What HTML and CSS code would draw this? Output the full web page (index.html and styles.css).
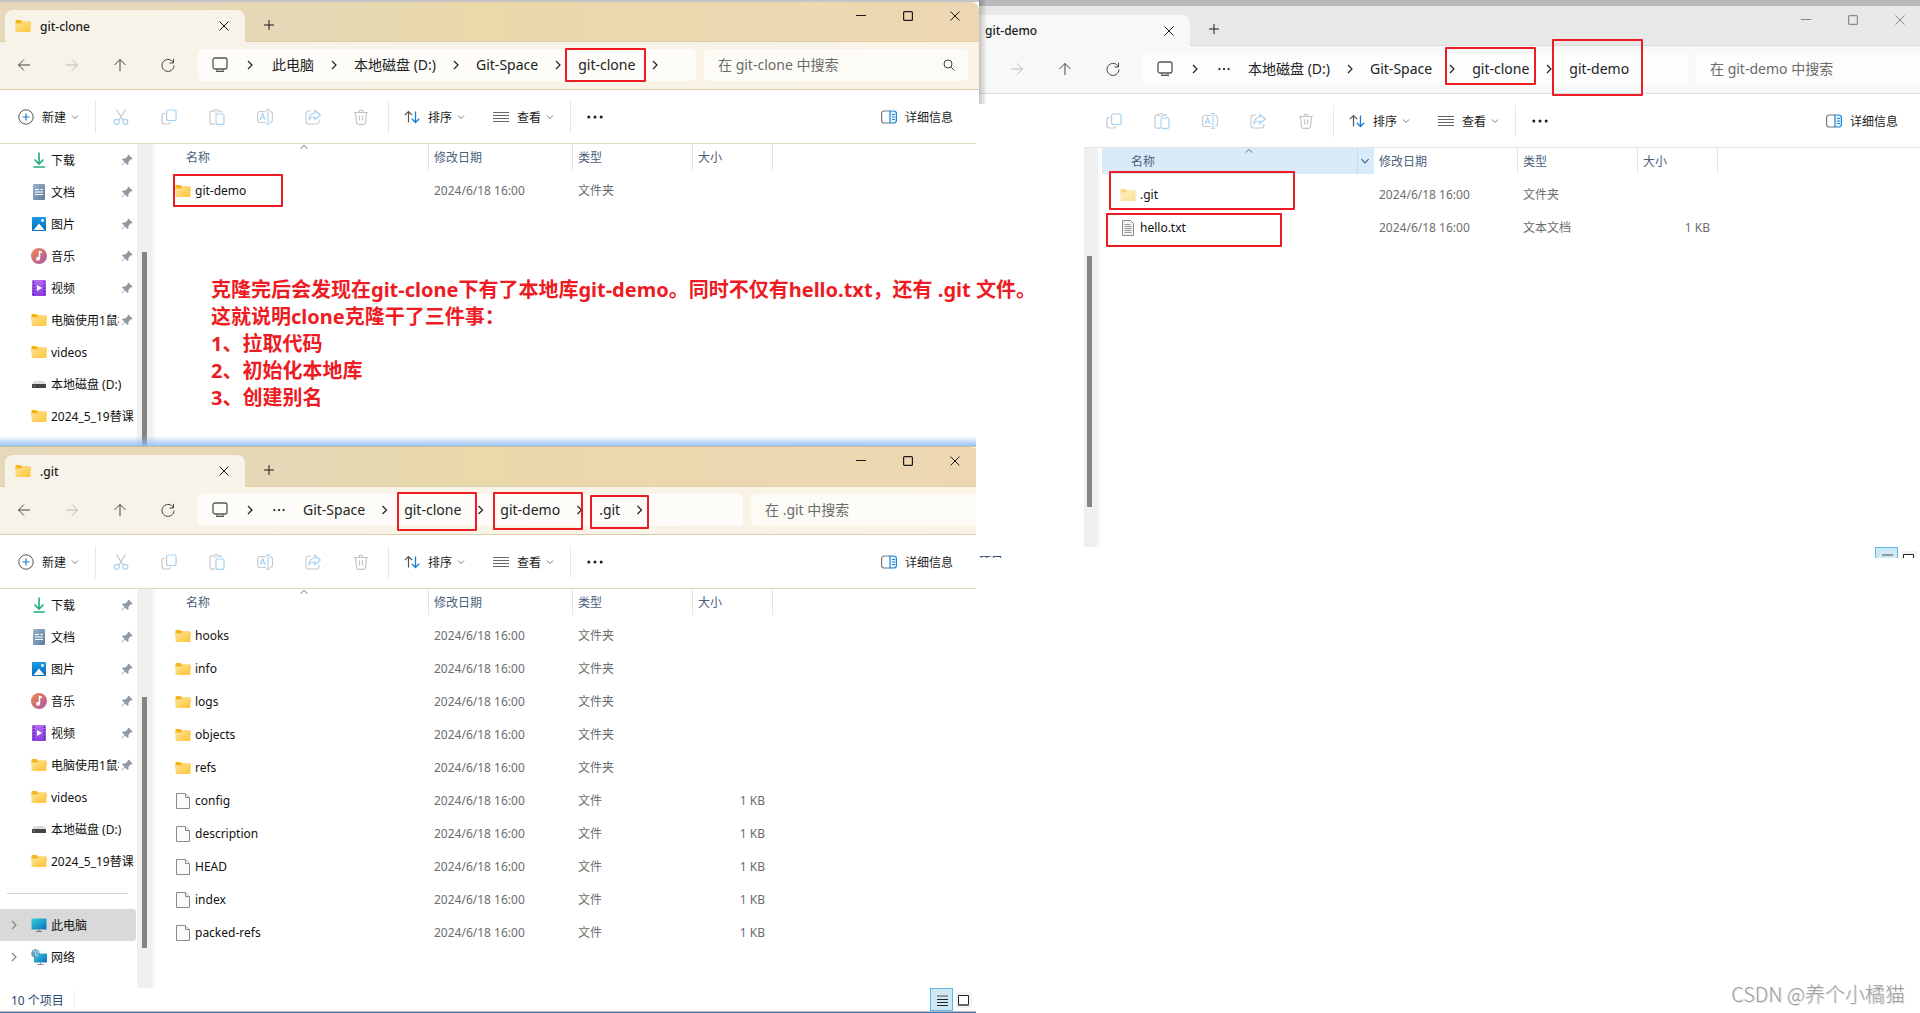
FILE: index.html
```html
<!DOCTYPE html>
<html lang="zh-CN">
<head>
<meta charset="utf-8">
<title>git-clone</title>
<link rel="stylesheet" href="styles.css">
</head>
<body>
<svg class="sprite" aria-hidden="true">
  <defs>
    <linearGradient id="g-folder" x1="0" y1="0" x2="1" y2="1"><stop offset="0" stop-color="#ffe49a"/><stop offset="1" stop-color="#fdc432"/></linearGradient>
    <linearGradient id="g-doc" x1="0" y1="0" x2="1" y2="1"><stop offset="0" stop-color="#9db4cc"/><stop offset="1" stop-color="#5d7da0"/></linearGradient>
    <linearGradient id="g-pic" x1="0" y1="0" x2="0" y2="1"><stop offset="0" stop-color="#1b9be8"/><stop offset="1" stop-color="#0669b8"/></linearGradient>
    <linearGradient id="g-music" x1="0" y1="0" x2="1" y2="1"><stop offset="0" stop-color="#f28a4c"/><stop offset="1" stop-color="#a855a8"/></linearGradient>
    <linearGradient id="g-video" x1="0" y1="0" x2="0" y2="1"><stop offset="0" stop-color="#b56cf2"/><stop offset="1" stop-color="#8a3fe0"/></linearGradient>
    <linearGradient id="g-screen" x1="0" y1="0" x2="1" y2="1"><stop offset="0" stop-color="#35d0e0"/><stop offset="1" stop-color="#0a6fb8"/></linearGradient>
  </defs>
  <symbol id="folder" viewBox="0 0 16 16"><path d="M.5 3q0-1 1-1h4l1.500 1.500h7.500q1 0 1 1V8H.5z" fill="#f5b51c"/><path d="M.5 5.500h5.500L7.500 4h7q1 0 1 1v8q0 1-1 1h-13q-1 0-1-1z" fill="url(#g-folder)"/></symbol>
  <symbol id="page" viewBox="0 0 16 16"><path d="M1.500.5h9l4 4v11h-13z" fill="#fafafa" stroke="#8a8a8a"/><path d="M10.500.5v4h4" fill="#eee" stroke="#8a8a8a"/></symbol>
  <symbol id="textfile" viewBox="0 0 16 16"><path d="M2.500.5h8l3 3v12h-11z" fill="#f2f2f2" stroke="#8a8a8a"/><path d="M4.500 4.500h6M4.500 6.500h7M4.500 8.500h7M4.500 10.500h7M4.500 12.500h7" stroke="#9a9a9a"/></symbol>
  <symbol id="download" viewBox="0 0 16 16"><path d="M8 .5v11M3.500 7.500 8 12l4.500-4.500M2.500 15h11.500" fill="none" stroke="#20ac84" stroke-width="1.600"/></symbol>
  <symbol id="doc" viewBox="0 0 16 16"><rect x="2" y="0" width="12" height="16" rx="1" fill="url(#g-doc)"/><path d="M4 5.500h4M4 8h8M4 10.500h8M9.500 5.500h2.500" stroke="#fff" stroke-width="1.200"/></symbol>
  <symbol id="picture" viewBox="0 0 16 16"><rect x="1" y="1" width="14" height="14" rx="1" fill="url(#g-pic)"/><path d="M2.500 14 8 7.500l5.500 6.500z" fill="#fff"/><circle cx="11.500" cy="4.500" r="1.400" fill="#fff"/></symbol>
  <symbol id="music" viewBox="0 0 16 16"><circle cx="8" cy="8" r="8" fill="url(#g-music)"/><path d="M8.500 10.500V3.500l2.500 1" fill="none" stroke="#fff" stroke-width="1.500"/><circle cx="7" cy="10.700" r="2" fill="#fff"/></symbol>
  <symbol id="video" viewBox="0 0 16 16"><rect x="1" y="0" width="14" height="16" rx="1" fill="url(#g-video)"/><path d="M6 5v6l5-3z" fill="#fff"/><path d="M2.800 1.500v14M13.200 1.500v14" stroke="#5a2499" stroke-width="1.400" stroke-dasharray="1.500 1.500"/></symbol>
  <symbol id="drive" viewBox="0 0 16 16"><path d="M3 5h10l2 3.500H1z" fill="#dcdcdc"/><rect x="1" y="8" width="14" height="4" rx=".6" fill="#444"/><path d="M2.500 10h1.500" stroke="#3fd35a" stroke-width="1.200"/></symbol>
  <symbol id="pc" viewBox="0 0 16 16"><rect x=".5" y="1.500" width="15" height="11" rx=".6" fill="url(#g-screen)"/><path d="M8 12.500v2M5 14.500h6" stroke="#778"/></symbol>
  <symbol id="network" viewBox="0 0 16 16"><rect x="3" y="4.500" width="13" height="9" rx=".6" fill="url(#g-screen)"/><path d="M9.500 13.500v2M6.500 15.500h6" stroke="#889"/><circle cx="4.500" cy="4.500" r="4.300" fill="#5f9fc4"/><path d="M2 2q3 0 2.500 2.500T7 7M6 1q-1 2 2 3" fill="none" stroke="#bfe3f2"/></symbol>
  <symbol id="pin" viewBox="0 0 12 12"><path d="M7.500.5 11.500 4.500l-1 1-1 0-2 2.300v2.200l-1 .9L4 8.400.8 11.500l-.4-.4L3.600 8 1 5.500l1-1h2.200l2.400-2V1.500z" fill="#8d9aa5"/></symbol>
  <symbol id="back" viewBox="0 0 16 16"><path d="M14 8H2.500M8 2.500 2.500 8 8 13.500" fill="none" stroke="currentColor"/></symbol>
  <symbol id="forward" viewBox="0 0 16 16"><path d="M2 8h11.500M8 2.500 13.500 8 8 13.500" fill="none" stroke="currentColor"/></symbol>
  <symbol id="up" viewBox="0 0 16 16"><path d="M8 14V2.500M2.500 8 8 2.500 13.500 8" fill="none" stroke="currentColor"/></symbol>
  <symbol id="refresh" viewBox="0 0 16 16"><path d="M13.500 6A6 6 0 1 0 14 8.500M13.500 1.800V6H9.500" fill="none" stroke="currentColor"/></symbol>
  <symbol id="monitor" viewBox="0 0 16 16"><rect x="1" y="1" width="14" height="11" rx="2" fill="none" stroke="#555" stroke-width="1.300"/><path d="M5 12v2.500M11 12v2.500M4 14.500h8" stroke="#555"/><path d="M5.500 13h5" stroke="#888"/></symbol>
  <symbol id="chev-r" viewBox="0 0 10 10"><path d="M3 1l4 4-4 4" fill="none" stroke="currentColor" stroke-width="1.200"/></symbol>
  <symbol id="chev-d" viewBox="0 0 10 10"><path d="M2 3.500l3 3 3-3" fill="none" stroke="currentColor"/></symbol>
  <symbol id="chev-u" viewBox="0 0 10 10"><path d="M1.500 6.500l3.500-3 3.500 3" fill="none" stroke="currentColor"/></symbol>
  <symbol id="dots" viewBox="0 0 16 16"><g fill="currentColor"><circle cx="1.800" cy="8" r="1.500"/><circle cx="8" cy="8" r="1.500"/><circle cx="14.200" cy="8" r="1.500"/></g></symbol>
  <symbol id="search" viewBox="0 0 12 12"><circle cx="5" cy="5" r="4" fill="none" stroke="currentColor"/><path d="M8 8l3.500 3.500" stroke="currentColor"/></symbol>
  <symbol id="close" viewBox="0 0 10 10"><path d="M.5.5l9 9M9.500.5l-9 9" stroke="currentColor"/></symbol>
  <symbol id="plus" viewBox="0 0 10 10"><path d="M5 0v10M0 5h10" stroke="currentColor"/></symbol>
  <symbol id="min" viewBox="0 0 10 10"><path d="M0 4.500h10" stroke="currentColor"/></symbol>
  <symbol id="max" viewBox="0 0 10 10"><rect x=".6" y=".6" width="8.800" height="8.800" rx="1" fill="none" stroke="currentColor" stroke-width="1.200"/></symbol>
  <symbol id="new" viewBox="0 0 16 16"><circle cx="8" cy="8" r="7.200" fill="none" stroke="#555"/><path d="M8 4.500v7M4.500 8h7" stroke="#1a7fd0" stroke-width="1.200"/></symbol>
  <symbol id="cut" viewBox="0 0 16 16"><path d="M3.500.5l6.500 10.500M12.500.5L6 11" stroke="#c6c6c6" stroke-width="1.200"/><g fill="none" stroke="#a5d2f2" stroke-width="1.200"><circle cx="3.700" cy="12.800" r="2.500"/><circle cx="12.300" cy="12.800" r="2.500"/></g></symbol>
  <symbol id="copy" viewBox="0 0 16 16"><path d="M4 4.500H3q-2 0-2 2v6q0 2.500 2.500 2.500H7q2 0 2.500-1.800" fill="none" stroke="#c8c8c8" stroke-width="1.200"/><rect x="5.600" y="1" width="9.500" height="10.500" rx="2" fill="none" stroke="#a5d2f2" stroke-width="1.200"/></symbol>
  <symbol id="paste" viewBox="0 0 16 16"><path d="M5 1.800H2.500Q1 1.800 1 3.500v10q0 1.700 1.500 1.700H6M9.500 1.800H11q1.500 0 1.500 1.700" fill="none" stroke="#c8c8c8" stroke-width="1.200"/><rect x="4.500" y=".6" width="5" height="2.400" rx="1.200" fill="none" stroke="#c8c8c8"/><rect x="7" y="5" width="8" height="10.300" rx="1.300" fill="none" stroke="#a5d2f2" stroke-width="1.200"/></symbol>
  <symbol id="rename" viewBox="0 0 16 16"><path d="M9 2.500H3Q.6 2.500.6 5v6q0 2.500 2.400 2.500h6M13 2.500q2.400 0 2.400 2.500v6q0 2.500-2.400 2.500" fill="none" stroke="#c8c8c8" stroke-width="1.100"/><path d="M11 .8v14.400M9 .7h4M9 15.300h4M3 11l2.600-6.500L8.200 11M4 9h3.500" fill="none" stroke="#a5d2f2" stroke-width="1.100"/></symbol>
  <symbol id="share" viewBox="0 0 16 16"><path d="M6 2H3.500Q1 2 1 4.500v8Q1 15 3.500 15h8q2.500 0 2.500-2.500V11" fill="none" stroke="#c8c8c8" stroke-width="1.100"/><path d="M9.800 1.500 15.300 6l-5.500 4.500V8Q6 8 4 10.500 4.500 4.500 9.800 4z" fill="none" stroke="#a5d2f2" stroke-width="1.200"/></symbol>
  <symbol id="trash" viewBox="0 0 16 16"><path d="M1 3.500h14M6 3.500q0-2.500 2-2.500t2 2.500M2.500 3.500l1 10q.2 1.800 2 1.800h5q1.800 0 2-1.800l1-10M6.500 6.500v5M9.500 6.500v5" fill="none" stroke="#c4c4c4" stroke-width="1.200"/></symbol>
  <symbol id="sort" viewBox="0 0 16 16"><path d="M4.500 13.500V2.500M.8 6.200 4.500 2.500l3.700 3.700" fill="none" stroke="#555" stroke-width="1.200"/><path d="M11.500 2.500v11M7.800 9.800l3.700 3.700 3.700-3.700" fill="none" stroke="#1a7fd0" stroke-width="1.300"/></symbol>
  <symbol id="view" viewBox="0 0 16 16"><path d="M0 3.500h16M0 6.500h16M0 9.500h16M0 12.500h16" stroke="#666"/></symbol>
  <symbol id="details" viewBox="0 0 16 16"><path d="M9 2H3.500Q.6 2 .6 4.500v7Q.6 14 3.500 14H9" fill="none" stroke="#777" stroke-width="1.200"/><path d="M9 2h3.500q2.900 0 2.900 2.500v7q0 2.500-2.900 2.500H9z" fill="#e6f3fc" stroke="#1a86d8" stroke-width="1.200"/><path d="M11 5.500h3M11 8h3M11 10.500h3" stroke="#1a86d8"/></symbol>
  <symbol id="v-list" viewBox="0 0 22 22"><path d="M6 7h11" stroke="#999" stroke-width="2"/><path d="M6 10.500h11M6 13.500h11M6 16.500h11" stroke="#222"/></symbol>
  <symbol id="v-large" viewBox="0 0 16 16"><path d="M2.500 12V3.500h10V12" fill="#fff" stroke="#222"/><path d="M2 13h11" stroke="#666" stroke-width="2"/></symbol>
</svg>

<main class="desktop">
  <div class="stack">
    <section class="window window-clone">
      <header class="titlebar">
        <div class="tab"><svg class="i16"><use href="#folder"/></svg><span class="tab-name">git-clone</span><button class="tab-close" aria-label="关闭标签页"><svg class="i10"><use href="#close"/></svg></button></div>
        <button class="tab-add" aria-label="新标签页"><svg class="i10"><use href="#plus"/></svg></button>
        <div class="controls"><button aria-label="最小化"><svg class="i10"><use href="#min"/></svg></button><button aria-label="最大化"><svg class="i10"><use href="#max"/></svg></button><button aria-label="关闭"><svg class="i10"><use href="#close"/></svg></button></div>
      </header>
      <nav class="navbar">
        <button aria-label="后退"><svg class="i16"><use href="#back"/></svg></button><button class="off" aria-label="前进"><svg class="i16"><use href="#forward"/></svg></button><button aria-label="向上"><svg class="i16"><use href="#up"/></svg></button><button aria-label="刷新"><svg class="i16"><use href="#refresh"/></svg></button>
        <div class="address"><svg class="i16"><use href="#monitor"/></svg><svg class="sep"><use href="#chev-r"/></svg><a href="#">此电脑</a><svg class="sep"><use href="#chev-r"/></svg><a href="#">本地磁盘 (D:)</a><svg class="sep"><use href="#chev-r"/></svg><a href="#">Git-Space</a><svg class="sep"><use href="#chev-r"/></svg><a href="#">git-clone</a><svg class="sep"><use href="#chev-r"/></svg></div>
        <label class="search"><input type="text" aria-label="搜索" placeholder="在 git-clone 中搜索"><svg class="i12"><use href="#search"/></svg></label>
      </nav>
      <div class="toolbar">
        <button class="new"><svg class="i16"><use href="#new"/></svg><span>新建</span><svg class="drop"><use href="#chev-d"/></svg></button><i class="rule"></i>
        <div class="actions"><button aria-label="剪切"><svg class="i16"><use href="#cut"/></svg></button><button aria-label="复制"><svg class="i16"><use href="#copy"/></svg></button><button aria-label="粘贴"><svg class="i16"><use href="#paste"/></svg></button><button aria-label="重命名"><svg class="i16"><use href="#rename"/></svg></button><button aria-label="共享"><svg class="i16"><use href="#share"/></svg></button><button aria-label="删除"><svg class="i16"><use href="#trash"/></svg></button></div><i class="rule"></i>
        <div class="menus"><button><svg class="i16"><use href="#sort"/></svg><span>排序</span><svg class="drop"><use href="#chev-d"/></svg></button><button><svg class="i16"><use href="#view"/></svg><span>查看</span><svg class="drop"><use href="#chev-d"/></svg></button></div><i class="rule"></i>
        <button class="more" aria-label="查看更多"><svg class="i16"><use href="#dots"/></svg></button>
        <button class="details"><svg class="i16"><use href="#details"/></svg><span>详细信息</span></button>
      </div>
      <div class="body">
        <aside class="side">
          <ul>
            <li><a href="#"><svg class="i16"><use href="#download"/></svg><span>下载</span><svg class="pin"><use href="#pin"/></svg></a></li>
            <li><a href="#"><svg class="i16"><use href="#doc"/></svg><span>文档</span><svg class="pin"><use href="#pin"/></svg></a></li>
            <li><a href="#"><svg class="i16"><use href="#picture"/></svg><span>图片</span><svg class="pin"><use href="#pin"/></svg></a></li>
            <li><a href="#"><svg class="i16"><use href="#music"/></svg><span>音乐</span><svg class="pin"><use href="#pin"/></svg></a></li>
            <li><a href="#"><svg class="i16"><use href="#video"/></svg><span>视频</span><svg class="pin"><use href="#pin"/></svg></a></li>
            <li><a href="#"><svg class="i16"><use href="#folder"/></svg><span>电脑使用1鼠标</span><svg class="pin"><use href="#pin"/></svg></a></li>
            <li><a href="#"><svg class="i16"><use href="#folder"/></svg><span>videos</span></a></li>
            <li><a href="#"><svg class="i16"><use href="#drive"/></svg><span>本地磁盘 (D:)</span></a></li>
            <li><a href="#"><svg class="i16"><use href="#folder"/></svg><span>2024_5_19替课</span></a></li>
          </ul>
        </aside>
        <div class="scroll"><i class="thumb"></i></div>
        <div class="files">
          <table>
            <thead><tr><th class="c-name"><div>名称<svg class="caret"><use href="#chev-u"/></svg></div></th><th class="c-date"><div>修改日期</div></th><th class="c-type"><div>类型</div></th><th class="c-size"><div>大小</div></th></tr></thead>
            <tbody><tr><td><span><svg class="i16"><use href="#folder"/></svg>git-demo</span></td><td>2024/6/18 16:00</td><td>文件夹</td><td></td></tr></tbody>
          </table>
        </div>
      </div>
      <i class="mark m-clone-path"></i><i class="mark m-clone-row"></i>
      <p class="note">克隆完后会发现在git-clone下有了本地库git-demo。同时不仅有hello.txt，还有 .git 文件。<br>这就说明clone克隆干了三件事：<br>1、拉取代码<br>2、初始化本地库<br>3、创建别名</p>
    </section>

    <section class="window window-git">
      <header class="titlebar">
        <div class="tab"><svg class="i16"><use href="#folder"/></svg><span class="tab-name">.git</span><button class="tab-close" aria-label="关闭标签页"><svg class="i10"><use href="#close"/></svg></button></div>
        <button class="tab-add" aria-label="新标签页"><svg class="i10"><use href="#plus"/></svg></button>
        <div class="controls"><button aria-label="最小化"><svg class="i10"><use href="#min"/></svg></button><button aria-label="最大化"><svg class="i10"><use href="#max"/></svg></button><button aria-label="关闭"><svg class="i10"><use href="#close"/></svg></button></div>
      </header>
      <nav class="navbar">
        <button aria-label="后退"><svg class="i16"><use href="#back"/></svg></button><button class="off" aria-label="前进"><svg class="i16"><use href="#forward"/></svg></button><button aria-label="向上"><svg class="i16"><use href="#up"/></svg></button><button aria-label="刷新"><svg class="i16"><use href="#refresh"/></svg></button>
        <div class="address"><svg class="i16"><use href="#monitor"/></svg><svg class="sep"><use href="#chev-r"/></svg><svg class="ellipsis"><use href="#dots"/></svg><a href="#">Git-Space</a><svg class="sep"><use href="#chev-r"/></svg><a href="#">git-clone</a><svg class="sep"><use href="#chev-r"/></svg><a href="#">git-demo</a><svg class="sep"><use href="#chev-r"/></svg><a href="#">.git</a><svg class="sep"><use href="#chev-r"/></svg></div>
        <label class="search"><input type="text" aria-label="搜索" placeholder="在 .git 中搜索"></label>
      </nav>
      <div class="toolbar">
        <button class="new"><svg class="i16"><use href="#new"/></svg><span>新建</span><svg class="drop"><use href="#chev-d"/></svg></button><i class="rule"></i>
        <div class="actions"><button aria-label="剪切"><svg class="i16"><use href="#cut"/></svg></button><button aria-label="复制"><svg class="i16"><use href="#copy"/></svg></button><button aria-label="粘贴"><svg class="i16"><use href="#paste"/></svg></button><button aria-label="重命名"><svg class="i16"><use href="#rename"/></svg></button><button aria-label="共享"><svg class="i16"><use href="#share"/></svg></button><button aria-label="删除"><svg class="i16"><use href="#trash"/></svg></button></div><i class="rule"></i>
        <div class="menus"><button><svg class="i16"><use href="#sort"/></svg><span>排序</span><svg class="drop"><use href="#chev-d"/></svg></button><button><svg class="i16"><use href="#view"/></svg><span>查看</span><svg class="drop"><use href="#chev-d"/></svg></button></div><i class="rule"></i>
        <button class="more" aria-label="查看更多"><svg class="i16"><use href="#dots"/></svg></button>
        <button class="details"><svg class="i16"><use href="#details"/></svg><span>详细信息</span></button>
      </div>
      <div class="body">
        <aside class="side">
          <ul>
            <li><a href="#"><svg class="i16"><use href="#download"/></svg><span>下载</span><svg class="pin"><use href="#pin"/></svg></a></li>
            <li><a href="#"><svg class="i16"><use href="#doc"/></svg><span>文档</span><svg class="pin"><use href="#pin"/></svg></a></li>
            <li><a href="#"><svg class="i16"><use href="#picture"/></svg><span>图片</span><svg class="pin"><use href="#pin"/></svg></a></li>
            <li><a href="#"><svg class="i16"><use href="#music"/></svg><span>音乐</span><svg class="pin"><use href="#pin"/></svg></a></li>
            <li><a href="#"><svg class="i16"><use href="#video"/></svg><span>视频</span><svg class="pin"><use href="#pin"/></svg></a></li>
            <li><a href="#"><svg class="i16"><use href="#folder"/></svg><span>电脑使用1鼠标</span><svg class="pin"><use href="#pin"/></svg></a></li>
            <li><a href="#"><svg class="i16"><use href="#folder"/></svg><span>videos</span></a></li>
            <li><a href="#"><svg class="i16"><use href="#drive"/></svg><span>本地磁盘 (D:)</span></a></li>
            <li><a href="#"><svg class="i16"><use href="#folder"/></svg><span>2024_5_19替课</span></a></li>
          </ul>
          <hr>
          <ul class="tree">
            <li class="current"><a href="#"><svg class="i10"><use href="#chev-r"/></svg><svg class="i16"><use href="#pc"/></svg><span>此电脑</span></a></li>
            <li><a href="#"><svg class="i10"><use href="#chev-r"/></svg><svg class="i16"><use href="#network"/></svg><span>网络</span></a></li>
          </ul>
        </aside>
        <div class="scroll"><i class="thumb"></i></div>
        <div class="files">
          <table>
            <thead><tr><th class="c-name"><div>名称<svg class="caret"><use href="#chev-u"/></svg></div></th><th class="c-date"><div>修改日期</div></th><th class="c-type"><div>类型</div></th><th class="c-size"><div>大小</div></th></tr></thead>
            <tbody>
              <tr><td><span><svg class="i16"><use href="#folder"/></svg>hooks</span></td><td>2024/6/18 16:00</td><td>文件夹</td><td></td></tr>
              <tr><td><span><svg class="i16"><use href="#folder"/></svg>info</span></td><td>2024/6/18 16:00</td><td>文件夹</td><td></td></tr>
              <tr><td><span><svg class="i16"><use href="#folder"/></svg>logs</span></td><td>2024/6/18 16:00</td><td>文件夹</td><td></td></tr>
              <tr><td><span><svg class="i16"><use href="#folder"/></svg>objects</span></td><td>2024/6/18 16:00</td><td>文件夹</td><td></td></tr>
              <tr><td><span><svg class="i16"><use href="#folder"/></svg>refs</span></td><td>2024/6/18 16:00</td><td>文件夹</td><td></td></tr>
              <tr><td><span><svg class="i16"><use href="#page"/></svg>config</span></td><td>2024/6/18 16:00</td><td>文件</td><td>1 KB</td></tr>
              <tr><td><span><svg class="i16"><use href="#page"/></svg>description</span></td><td>2024/6/18 16:00</td><td>文件</td><td>1 KB</td></tr>
              <tr><td><span><svg class="i16"><use href="#page"/></svg>HEAD</span></td><td>2024/6/18 16:00</td><td>文件</td><td>1 KB</td></tr>
              <tr><td><span><svg class="i16"><use href="#page"/></svg>index</span></td><td>2024/6/18 16:00</td><td>文件</td><td>1 KB</td></tr>
              <tr><td><span><svg class="i16"><use href="#page"/></svg>packed-refs</span></td><td>2024/6/18 16:00</td><td>文件</td><td>1 KB</td></tr>
            </tbody>
          </table>
        </div>
      </div>
      <footer class="status"><span>10 个项目</span><button class="v-list" aria-label="详细信息视图"><svg><use href="#v-list"/></svg></button><button class="v-large" aria-label="大缩略图"><svg><use href="#v-large"/></svg></button></footer>
      <i class="mark m-git-clone"></i><i class="mark m-git-demo"></i><i class="mark m-git-git"></i>
    </section>
  </div>

  <section class="window window-demo">
    <header class="titlebar">
      <div class="tab"><span class="tab-name">git-demo</span><button class="tab-close" aria-label="关闭标签页"><svg class="i10"><use href="#close"/></svg></button></div>
      <button class="tab-add" aria-label="新标签页"><svg class="i10"><use href="#plus"/></svg></button>
      <div class="controls"><button aria-label="最小化"><svg class="i10"><use href="#min"/></svg></button><button aria-label="最大化"><svg class="i10"><use href="#max"/></svg></button><button aria-label="关闭"><svg class="i10"><use href="#close"/></svg></button></div>
    </header>
    <nav class="navbar">
      <button class="off" aria-label="前进"><svg class="i16"><use href="#forward"/></svg></button><button aria-label="向上"><svg class="i16"><use href="#up"/></svg></button><button aria-label="刷新"><svg class="i16"><use href="#refresh"/></svg></button>
      <div class="address"><svg class="i16"><use href="#monitor"/></svg><svg class="sep"><use href="#chev-r"/></svg><svg class="ellipsis"><use href="#dots"/></svg><a href="#">本地磁盘 (D:)</a><svg class="sep"><use href="#chev-r"/></svg><a href="#">Git-Space</a><svg class="sep"><use href="#chev-r"/></svg><a href="#">git-clone</a><svg class="sep"><use href="#chev-r"/></svg><a href="#">git-demo</a></div>
      <label class="search"><input type="text" aria-label="搜索" placeholder="在 git-demo 中搜索"></label>
    </nav>
    <div class="toolbar">
      <div class="actions"><button aria-label="复制"><svg class="i16"><use href="#copy"/></svg></button><button aria-label="粘贴"><svg class="i16"><use href="#paste"/></svg></button><button aria-label="重命名"><svg class="i16"><use href="#rename"/></svg></button><button aria-label="共享"><svg class="i16"><use href="#share"/></svg></button><button aria-label="删除"><svg class="i16"><use href="#trash"/></svg></button></div><i class="rule"></i>
      <div class="menus"><button><svg class="i16"><use href="#sort"/></svg><span>排序</span><svg class="drop"><use href="#chev-d"/></svg></button><button><svg class="i16"><use href="#view"/></svg><span>查看</span><svg class="drop"><use href="#chev-d"/></svg></button></div><i class="rule"></i>
      <button class="more" aria-label="查看更多"><svg class="i16"><use href="#dots"/></svg></button>
      <button class="details"><svg class="i16"><use href="#details"/></svg><span>详细信息</span></button>
    </div>
    <div class="body">
      <div class="scroll"><i class="thumb"></i></div>
      <div class="files">
        <table>
          <thead><tr><th class="c-name hot"><div>名称<svg class="caret"><use href="#chev-u"/></svg><svg class="filter"><use href="#chev-d"/></svg></div></th><th class="c-date"><div>修改日期</div></th><th class="c-type"><div>类型</div></th><th class="c-size"><div>大小</div></th></tr></thead>
          <tbody>
            <tr><td><span><svg class="i16 faded"><use href="#folder"/></svg>.git</span></td><td>2024/6/18 16:00</td><td>文件夹</td><td></td></tr>
            <tr><td><span><svg class="i16"><use href="#textfile"/></svg>hello.txt</span></td><td>2024/6/18 16:00</td><td>文本文档</td><td>1 KB</td></tr>
          </tbody>
        </table>
      </div>
    </div>
    <footer class="status"><span>项目</span><button class="v-list" aria-label="详细信息视图"><svg><use href="#v-list"/></svg></button><button class="v-large" aria-label="大缩略图"><svg><use href="#v-large"/></svg></button></footer>
    <i class="mark m-demo-clone"></i><i class="mark m-demo-demo"></i><i class="mark m-demo-git"></i><i class="mark m-demo-hello"></i>
  </section>
  <p class="watermark">CSDN @养个小橘猫</p>
</main>
</body>
</html>
```

FILE: styles.css
```css
* { box-sizing: border-box; }

body {
  margin: 0;
  background: #fff;
  color: #1b1b1b;
  font: 12px/16px "Noto Sans", "Noto Sans CJK SC", sans-serif;
}

button {
  display: flex;
  align-items: center;
  justify-content: center;
  padding: 0;
  border: 0;
  background: none;
  color: inherit;
  font: inherit;
}

a { color: inherit; text-decoration: none; }
ul { margin: 0; padding: 0; list-style: none; }
svg { display: block; flex: none; }
.sprite { position: absolute; width: 0; height: 0; }
.i16 { width: 16px; height: 16px; }
.i12 { width: 12px; height: 12px; }
.i10 { width: 10px; height: 10px; }

.desktop {
  position: relative;
  display: grid;
  grid-template-columns: minmax(0, 979fr) minmax(0, 941fr);
  align-items: start;
  min-height: 100vh;
  overflow: hidden;
}

.stack { position: relative; z-index: 1; }
.window { position: relative; }
.window-clone { border-top: 2px solid #c4c4c8; }
.window-git {
  border-top: 1px solid #c9bda0;
  border-bottom: 1px solid #4674a8;
  clip-path: inset(-12px 3px 0 0);
}
.window-git::before {
  content: "";
  position: absolute;
  inset: -11px 0 auto 0;
  height: 10px;
  background: linear-gradient(rgba(150, 196, 245, 0), rgba(140, 188, 242, .9));
}
.window-demo::before {
  content: "";
  position: absolute;
  z-index: 2;
  width: 8px;
  height: 104px;
  background: linear-gradient(90deg, rgba(0, 0, 0, .22), rgba(0, 0, 0, 0));
}

/* Title bar */
.titlebar {
  display: flex;
  align-items: flex-end;
  height: 40px;
  padding-left: 5px;
  border-bottom: 1px solid #dfceaa;
  border-radius: 0 8px 0 0;
  background: linear-gradient(90deg, #e6d8ba, #e6d7b6 30%, #ead9a9 48%, #ecd8b0 75%, #ecd7b2);
}
.tab {
  display: flex;
  align-items: center;
  width: 240px;
  height: 32px;
  margin-bottom: -1px;
  padding: 0 16px 0 10px;
  border-radius: 8px 8px 0 0;
  background: #f8f3e9;
}
.tab-name { flex: 1; padding: 1px 0 0 9px; font-weight: 500; }
.tab-add { width: 32px; height: 32px; margin-left: 8px; }
.controls { display: flex; align-self: flex-start; margin: 0 1px 0 auto; }
.controls button { width: 47px; height: 28px; }

.window-demo .titlebar {
  height: 46px;
  padding-left: 0;
  border-top: 6px solid #b9b9b9;
  border-bottom-color: #dcdcdc;
  border-radius: 0;
  background: #e8e8e8;
}
.window-demo .tab { width: 211px; height: 31px; padding-left: 6px; border-radius: 0 8px 0 0; background: #f8f8f8; }
.window-demo .tab-name { padding-left: 0; }
.window-demo .controls { margin-right: -3px; color: #888; }

/* Navigation bar */
.navbar {
  display: flex;
  align-items: center;
  height: 48px;
  padding-bottom: 1px;
  border-bottom: 1px solid #dccdaa;
  background: linear-gradient(90deg, #f8f3e9, #faf3e6);
  color: #444;
}
.navbar button { width: 48px; height: 32px; }
.navbar .off { color: #bbb; }
.address {
  display: flex;
  flex: 1;
  align-items: center;
  min-width: 0;
  height: 32px;
  margin: 0 8px 0 6px;
  padding-left: 14px;
  border-radius: 5px;
  background: #fdfcf8;
  color: #222;
  font-size: 14px;
  line-height: 20px;
  white-space: nowrap;
}
.sep { width: 40px; height: 10px; }
.sep:nth-child(2) { width: 44px; }
.window-git a ~ .sep { width: 39px; }
.ellipsis { width: 12px; height: 12px; margin: 0 18px 0 1px; }
.search {
  display: flex;
  flex: none;
  align-items: center;
  width: 264px;
  height: 32px;
  margin-right: 11px;
  padding: 0 13px 0 14px;
  border-radius: 5px;
  background: #fdfbf6;
}
.search input {
  flex: 1;
  min-width: 0;
  padding: 0;
  border: 0;
  outline: 0;
  background: none;
  font: 14px/20px "Noto Sans", "Noto Sans CJK SC", sans-serif;
}
.search input::placeholder { color: #6b6b6b; }
.window-git .search { margin-right: -36px; }
.window-demo .navbar { padding-left: 14px; border-color: #dcdcdc; background: #f8f8f8; }
.window-demo .address, .window-demo .search { background: #fdfdfd; }
.window-demo .search { margin-right: -40px; }

/* Toolbar */
.toolbar {
  display: flex;
  align-items: center;
  height: 54px;
  margin-right: 3px;
  padding-right: 23px;
  border-bottom: 1px solid #e4d9c4;
}
.toolbar span { padding-top: 2px; }
.rule { width: 1px; height: 32px; background: #e8e8e8; }
.drop { width: 10px; height: 10px; margin-left: -4px; color: #777; }
.new, .menus button, .details { gap: 8px; white-space: nowrap; }
.new { width: 95px; padding-left: 18px; justify-content: flex-start; }
.actions { display: flex; margin: 0 3px 0 1px; }
.actions button { width: 48px; height: 32px; }
.menus { display: flex; gap: 27px; margin: 0 15px; }
.more { margin-left: 16px; }
.details { margin-left: auto; }
.window-demo .toolbar { margin: 0 0 0 105px; padding: 0 22px 0 5px; border-color: #e2e2e2; }

/* Sidebar */
.body { display: flex; }
.side { width: 137px; padding-right: 1px; padding-bottom: 14px; }
.side a { display: flex; align-items: center; height: 32px; padding-left: 31px; color: #111; }
.side span { flex: 1; min-width: 0; margin-left: 4px; padding-top: 2px; overflow: hidden; white-space: nowrap; }
.pin { width: 12px; height: 12px; margin: 0 3px 0 2px; }
.side hr { height: 1px; margin: 16px 8px 15px 7px; border: 0; background: #d4d4d4; }
.tree a { padding-left: 9px; }
.tree .i10 { margin-right: 12px; color: #888; }
.tree .current { border-radius: 0 3px 3px 0; background: #d9d9d9; }
.scroll { display: flex; width: 16px; padding: 108px 6px 0 5px; background: #f0f0f0; }
.thumb { flex: 1; background: #858585; }
.window-git .side { padding-bottom: 15px; }
.window-git .scroll { padding-bottom: 40px; }
.window-demo .scroll { width: 14px; height: 399px; margin-left: 105px; padding: 108px 6px 40px 3px; }

/* File list */
.files { flex: 1; min-width: 0; margin-left: 1px; padding-left: 2px; border-left: 1px solid #f2f2f2; }
table { width: 616px; border-spacing: 0; table-layout: fixed; }
.c-name { width: 272px; }
.c-date { width: 144px; }
.c-type { width: 120px; }
.c-size { width: 80px; }
th { height: 30px; padding: 0; color: #4c607a; font-weight: 400; text-align: left; vertical-align: top; }
th div { position: relative; height: 26px; padding: 6px 0 0 5px; border-right: 1px solid #e5e5e5; }
.c-name div { padding-left: 29px; }
.caret { position: absolute; top: -2px; left: 142px; width: 10px; height: 10px; color: #777; }
.hot div { border-right-color: #d9ebf9; background: linear-gradient(90deg, #d9ebf9 255px, #c3dcef 255px, #c3dcef 256px, #d9ebf9 256px); }
.filter { position: absolute; top: 7px; right: 2px; width: 12px; height: 12px; }
td { height: 33px; padding: 0 0 0 5px; color: #6d6d6d; }
td:first-child { padding-left: 18px; color: #111; }
td:last-child { padding: 0 8px 0 0; text-align: right; }
td span { display: flex; align-items: center; gap: 4px; }
.faded { opacity: .55; }

/* Status bar */
.status {
  display: flex;
  align-items: center;
  height: 24px;
  padding: 0 7px 0 11px;
  border-bottom: 1px solid #bdbdbd;
  color: #2b4870;
}
.status span { padding: 2px 10px 0 0; border-right: 1px solid #f0f0f0; }
.v-list { width: 23px; height: 23px; margin: 0 3px 0 auto; border: 1px solid #5cb8e6; background: #cfe8f6; }
.v-list svg { width: 22px; height: 22px; }
.v-large { width: 16px; height: 16px; background: #f3f3f3; }
.v-large svg { width: 16px; height: 16px; }
.window-demo .status { align-items: flex-start; height: 11px; padding: 0 3px 0 0; border: 0; overflow: hidden; }
.window-demo .status span { padding: 7px 10px 0 0; border: 0; }
.window-demo .v-large { margin-top: 4px; }

/* Annotations drawn over the windows */
.mark { position: absolute; border: 2px solid #ed1c24; border-radius: 1px; }
.m-clone-path { left: 565px; top: 46px; width: 81px; height: 34px; }
.m-clone-row { left: 173px; top: 172px; width: 110px; height: 33px; }
.m-git-clone { left: 397px; top: 45px; width: 80px; height: 39px; }
.m-git-demo { left: 493px; top: 45px; width: 90px; height: 38px; }
.m-git-git { left: 590px; top: 48px; width: 59px; height: 34px; }
.m-demo-clone { left: 466px; top: 47px; width: 91px; height: 38px; }
.m-demo-demo { left: 573px; top: 39px; width: 91px; height: 57px; }
.m-demo-git { left: 130px; top: 171px; width: 186px; height: 39px; }
.m-demo-hello { left: 127px; top: 213px; width: 176px; height: 34px; }
.note {
  position: absolute;
  left: 211px;
  top: 274px;
  margin: 0;
  color: #ed1c24;
  font-size: 20px;
  font-weight: 700;
  line-height: 27px;
  white-space: nowrap;
}
.watermark {
  position: absolute;
  right: 15px;
  bottom: 7px;
  margin: 0;
  color: #9c9c9c;
  font: 300 20px/24px "Noto Sans CJK SC", sans-serif;
  text-shadow: 1px 1px 0 #e4e4e4;
}
```
